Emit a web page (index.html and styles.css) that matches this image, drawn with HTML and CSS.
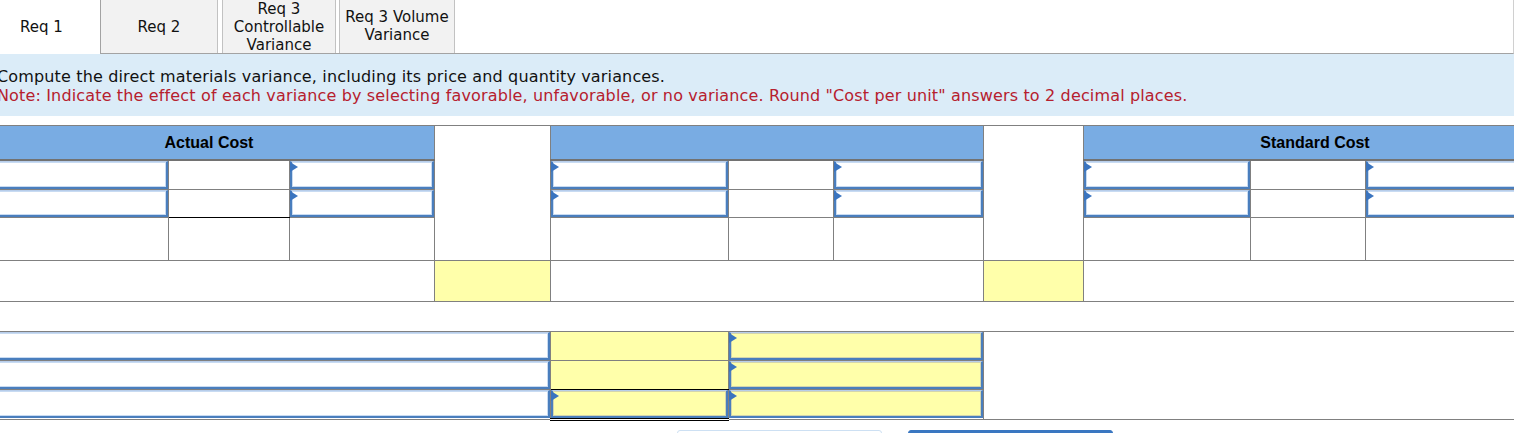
FILE: index.html
```html
<!DOCTYPE html>
<html>
<head>
<meta charset="utf-8">
<title>Req 1</title>
<link rel="stylesheet" href="styles.css">
</head>
<body>
<div class="page">
  <div class="tabs">
    <div class="tab active">Req 1</div>
    <div class="tab t2">Req 2</div>
    <div class="tab t3">Req 3<br>Controllable<br>Variance</div>
    <div class="tab t4">Req 3 Volume<br>Variance</div>
  </div>

  <div class="instr">
    <p class="q">Compute the direct materials variance, including its price and quantity variances.</p>
    <p class="note">Note: Indicate the effect of each variance by selecting favorable, unfavorable, or no variance. Round "Cost per unit" answers to 2 decimal places.</p>
  </div>

  <table class="grid top">
    <colgroup>
      <col class="c1"><col class="c2"><col class="c3"><col class="c4"><col class="c5"><col class="c6"><col class="c7"><col class="c8"><col class="c9"><col class="c10"><col class="c11">
    </colgroup>
    <tr class="rh">
      <td class="hd" colspan="3">Actual Cost</td>
      <td class="sp" rowspan="4"></td>
      <td class="hd" colspan="3"></td>
      <td class="sp" rowspan="4"></td>
      <td class="hd" colspan="3">Standard Cost</td>
    </tr>
    <tr class="r1">
      <td><div class="inp"></div></td>
      <td></td>
      <td><div class="inp tri"></div></td>
      <td><div class="inp tri"></div></td>
      <td></td>
      <td><div class="inp tri"></div></td>
      <td><div class="inp tri"></div></td>
      <td></td>
      <td><div class="inp tri"></div></td>
    </tr>
    <tr class="r2">
      <td><div class="inp"></div></td>
      <td class="tot"></td>
      <td><div class="inp tri"></div></td>
      <td><div class="inp tri"></div></td>
      <td></td>
      <td><div class="inp tri"></div></td>
      <td><div class="inp tri"></div></td>
      <td></td>
      <td><div class="inp tri"></div></td>
    </tr>
    <tr class="r3">
      <td></td><td></td><td></td>
      <td></td><td></td><td></td>
      <td></td><td></td><td></td>
    </tr>
    <tr class="r4">
      <td colspan="3"></td>
      <td class="y"></td>
      <td colspan="3"></td>
      <td class="y"></td>
      <td colspan="3"></td>
    </tr>
  </table>

  <table class="grid bottom">
    <colgroup>
      <col class="c1"><col class="c2"><col class="c3"><col class="c4"><col class="c5"><col class="c6"><col class="c7"><col class="c8"><col class="c9"><col class="c10"><col class="c11">
    </colgroup>
    <tr class="b1">
      <td colspan="4"><div class="inp"></div></td>
      <td class="y"></td>
      <td colspan="2"><div class="inp y tri"></div></td>
      <td colspan="4" rowspan="3"></td>
    </tr>
    <tr class="b2">
      <td colspan="4"><div class="inp"></div></td>
      <td class="y tot"></td>
      <td colspan="2"><div class="inp y tri"></div></td>
    </tr>
    <tr class="b3">
      <td colspan="4"><div class="inp"></div></td>
      <td class="dbl"><div class="inp y tri"></div></td>
      <td colspan="2"><div class="inp y tri"></div></td>
    </tr>
  </table>

  <div class="nav">
    <button class="btn prev">&lt; Req 1</button>
    <button class="btn next">Req 2 &gt;</button>
  </div>
</div>
</body>
</html>
```

FILE: styles.css
```css
html, body {
  margin: 0;
  padding: 0;
  background: #ffffff;
  overflow: hidden;
}

body {
  font-family: "DejaVu Sans", Verdana, sans-serif;
  color: #111111;
}

.page {
  margin-left: -17px;
  width: 1531px;
  overflow: hidden;
}

/* ---------- tabs ---------- */
.tabs {
  display: flex;
  align-items: flex-start;
  height: 53px;
  border-bottom: 1px solid #a3a3a3;
  border-right: 1px solid #d0d0d0;
}

.tab {
  box-sizing: border-box;
  height: 53px;
  padding-bottom: 0;
  display: flex;
  align-items: center;
  justify-content: center;
  text-align: center;
  font-size: 15px;
  line-height: 18px;
  color: #111111;
  background: #f2f2f2;
  border-left: 1px solid #c2c2c2;
  border-right: 1px solid #c2c2c2;
}

.tab.active {
  width: 118px;
  height: 54px;
  margin-bottom: -1px;
  background: #ffffff;
  border-left: none;
  border-right: 1px solid #a3a3a3;
}

.t2 {
  width: 117px;
  border-left: none;
}

.t3 {
  width: 114px;
  margin-left: 4px;
}

.t4 {
  width: 116px;
  margin-left: 3px;
  padding-bottom: 2px;
}

/* ---------- instructions ---------- */
.instr {
  background: #dbecf8;
  padding: 13px 0 11px 14px;
  font-size: 16px;
  line-height: 19px;
  letter-spacing: 0.15px;
}

.instr p {
  margin: 0;
  white-space: nowrap;
}

.q {
  color: #111111;
}

.note {
  color: #b6202e;
}

/* ---------- grid tables ---------- */
.grid {
  border-collapse: collapse;
  table-layout: fixed;
  width: 1563px;
}

.grid td {
  border: 1px solid #808080;
  padding: 0;
  vertical-align: top;
}

.c1 { width: 185px; }
.c2 { width: 121px; }
.c3 { width: 145px; }
.c4 { width: 116px; }
.c5 { width: 178px; }
.c6 { width: 105px; }
.c7 { width: 150px; }
.c8 { width: 100px; }
.c9 { width: 167px; }
.c10 { width: 115px; }
.c11 { width: 181px; }

.top {
  margin-top: 9px;
}

.bottom {
  margin-top: 29px;
}

.grid td.hd {
  background: #79ace3;
  font-family: "Liberation Sans", Arial, sans-serif;
  font-weight: bold;
  font-size: 16px;
  color: #000000;
  text-align: center;
  vertical-align: middle;
  padding-top: 1px;
  border-bottom: 2px solid #727272;
}

.rh { height: 34px; }
.r3 { height: 43px; }
.r4 { height: 41px; }

.grid td.y {
  background: #ffffaa;
}

.grid td.tot {
  border-bottom: 1px solid #000000;
}

.grid td.dbl {
  border-bottom: 3px double #000000;
}

/* input boxes */
.inp {
  box-sizing: border-box;
  position: relative;
  height: 28px;
  background: #ffffff;
  border: 2px solid #4a7ebd;
  border-top: 1px solid #b7cdea;
  box-shadow: inset 0 0 0 1px #c8dbf2;
}

.r2 .inp {
  height: 27px;
}

.inp.y {
  background: #ffffaa;
  box-shadow: inset 0 0 0 1px #d3d5ae;
}

.tri::before {
  content: "";
  position: absolute;
  left: -2px;
  top: 0;
  border-left: 8px solid #3a74bf;
  border-top: 5px solid transparent;
  border-bottom: 5px solid transparent;
}

/* ---------- navigation ---------- */
.nav {
  display: flex;
  gap: 26px;
  padding-left: 694px;
  margin-top: 9px;
}

.btn {
  width: 205px;
  height: 40px;
  border-radius: 3px;
  font-family: "DejaVu Sans", Verdana, sans-serif;
  font-size: 15px;
}

.prev {
  background: #ffffff;
  border: 1px solid #cde0f3;
  color: #3a77c1;
}

.next {
  background: #3a77c1;
  border: 1px solid #3a77c1;
  color: #ffffff;
}
```
